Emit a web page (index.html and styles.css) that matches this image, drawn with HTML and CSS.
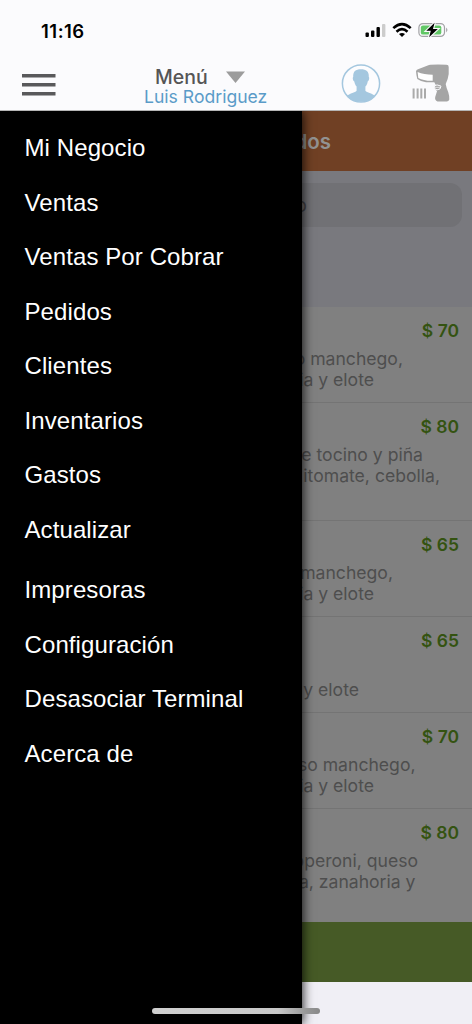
FILE: index.html
```html
<!DOCTYPE html>
<html lang="es">
<head>
<meta charset="utf-8">
<title>Menú</title>
<link rel="stylesheet" href="styles.css">
</head>
<body>
<div class="phone">
  <header class="top">
    <div class="status">
      <span class="clock">11:16</span>
      <svg class="signals" width="86" height="18" viewBox="0 0 86 18">
        <g fill="#000"><rect x="1.500" y="10.500" width="3.400" height="4.500" rx="1"/><rect x="7" y="8.500" width="3.400" height="6.500" rx="1"/><rect x="12.500" y="5" width="3.400" height="10" rx="1"/></g>
        <rect x="18" y="2" width="3.400" height="13" rx="1" fill="#ccc"/>
        <g fill="none" stroke="#000" stroke-width="2.600"><path d="M29.300 6.100Q38 -1.900 46.700 6.100"/><path d="M32.500 9.700Q38 4.700 43.500 9.700"/></g>
        <path d="M35 12.100Q38 9.900 41 12.100L38 15Z"/>
        <rect x="54.900" y="1.600" width="25.600" height="12.800" rx="4" fill="none" stroke="#a2a2a5" stroke-width="1.200"/>
        <rect x="56.800" y="3.400" width="20.500" height="9.200" rx="2.200" fill="#61c766"/>
        <path d="M82.100 5.600Q84.800 8 82.100 10.400Z" fill="#a2a2a5"/>
        <path d="M70.600 .8L62.300 8.800H66.800L65.100 15.200L73.800 7H69Z" stroke="#fbfbfd" stroke-width="2.200" paint-order="stroke"/>
      </svg>
    </div>
    <div class="nav">
      <svg class="burger" width="34" height="24" viewBox="0 0 34 24" fill="#59595b"><rect y="1" width="33.500" height="3.500"/><rect y="10" width="33.500" height="3.500"/><rect y="19" width="33.500" height="3.500"/></svg>
      <div class="heading">
        <div class="menu-title">Menú<svg width="20" height="13" viewBox="0 0 20 13"><path d="M0 .5H19L9.500 12Z" fill="#9c9c9c"/></svg></div>
        <div class="user">Luis Rodriguez</div>
      </div>
      <svg class="avatar" width="40" height="40" viewBox="0 0 40 40">
        <circle cx="20" cy="19.500" r="18.600" fill="#fcfcfe" stroke="#a4c7df" stroke-width="1.500"/>
        <path d="M20 5.300C14.500 5.300 12 7.500 12.200 13C11.500 13.200 11.700 16.700 13.300 17.500C13.800 20 14.600 21.500 15.600 22.500V26.800C14 29 9 29.100 6 31.900C13 39.700 27 39.700 34 31.900C31 29.100 26 29 24.400 26.800V22.500C25.500 21.500 26.300 20 26.700 17.500C28.300 16.700 28.500 13.200 27.800 13C28.200 7.500 25 5.300 20 5.300Z" fill="#a4c7df"/>
      </svg>
      <svg class="scanner" width="38" height="40" viewBox="0 0 38 40">
        <path d="M4 7.300Q4.300 6 6 5.300L17 1Q20 .4 34.500 .7Q36.700 .8 36.700 3V10Q36 15.500 33.700 20Q34.500 24.500 36.200 28Q37.500 32 37.300 35.500Q37 37.300 35 37.400H25.500Q22.500 36.500 23.200 33L25 27.300L22.300 23.500L23.700 20.700L22.300 18.200H14Q9 17.500 5.300 14.900Q4.200 11 4 7.300Z" fill="#a5a5a5"/>
        <path d="M5.600 8Q12 10.800 20.700 10.800V16.700Q12 17 6.300 13.900Z" fill="#fff"/>
        <path d="M22.500 22L25 20.900L29 22.100L28 24.900L25 25.900L22.200 24.300Z" fill="#a5a5a5" stroke="#fbfbfd"/>
        <path d="M22.500 23.300H28" stroke="#fbfbfd" stroke-width=".7"/>
        <g fill="#aaa"><rect x=".6" y="24.500" width="2" height="10"/><rect x="4.600" y="24.500" width="2" height="10"/><rect x="8.300" y="24.500" width="2" height="10"/><rect x="12" y="24.500" width="2" height="10"/></g>
      </svg>
    </div>
  </header>
  <main class="stage">
    <nav class="drawer">
      <a>Mi Negocio</a><a>Ventas</a><a>Ventas Por Cobrar</a><a>Pedidos</a><a>Clientes</a><a>Inventarios</a><a>Gastos</a><a>Actualizar</a>
      <a class="section">Impresoras</a><a>Configuración</a><a>Desasociar Terminal</a><a>Acerca de</a>
    </nav>
    <section class="orders">
      <div class="orders-title">dos</div>
      <div class="search-area"><div class="search"><span>o</span></div></div>
      <article class="row"><b>$ 70</b><p class="e402">o manchego,</p><p class="e374">ia y elote</p></article>
      <article class="row tall"><b>$ 80</b><p class="e423">e tocino y piña</p><p class="e439">itomate, cebolla,</p></article>
      <article class="row"><b>$ 65</b><p class="e392">manchego,</p><p class="e374">ia y elote</p></article>
      <article class="row"><b>$ 65</b><p></p><p class="e359">y elote</p></article>
      <article class="row"><b>$ 70</b><p class="e415">so manchego,</p><p class="e374">ia y elote</p></article>
      <article class="row last"><b>$ 80</b><p class="e418">pperoni, queso</p><p class="e415">a, zanahoria y</p></article>
      <div class="action"></div>
    </section>
  </main>
  <div class="home-bar"></div>
</div>
</body>
</html>
```
FILE: styles.css
```css
* { box-sizing: border-box; }
body { margin: 0; }
.phone {
  position: relative;
  width: 472px;
  height: 1024px;
  overflow: hidden;
  display: flex;
  flex-direction: column;
  background: #f0eff5;
  font-family: Inter, Roboto, sans-serif;
}
.top { height: 111px; background: #fbfbfd; border-bottom: 1px solid #b5b5b5; flex: none; }
.status { height: 60px; display: flex; align-items: center; padding: 1px 22px 0 41px; justify-content: space-between; }
.clock { font-size: 18.5px; font-weight: 600; letter-spacing: 0.5px; }
.nav { height: 50px; display: flex; align-items: flex-start; padding-left: 22px; }
.burger { margin-top: 13px; flex: none; }
.heading { margin-left: 88px; width: 140px; padding-top: 7px; flex: none; }
.menu-title { display: flex; align-items: center; gap: 18px; height: 21px; padding-left: 11px; font-size: 19.5px; line-height: 21px; font-weight: 500; color: #555; }
.user { font-size: 17.6px; line-height: 18px; color: #5a9bc8; white-space: nowrap; }
.avatar { margin: 4px 0 0 57px; flex: none; }
.scanner { margin: 4px 0 0 31px; flex: none; }
.stage { flex: 1; display: grid; grid-template-columns: 302px 170px; }
.drawer {
  position: relative;
  z-index: 1;
  padding: 10px 0 0 24.500px;
  background: #000;
  color: #fff;
  box-shadow: 1px 0 10px rgba(0, 0, 0, .85);
  font: 24px "Liberation Sans", Arial, sans-serif;
  letter-spacing: 0.1px;
  clip-path: inset(0 -30px 0 0);
}
.drawer a { display: block; height: 54.55px; line-height: 54px; white-space: nowrap; }
.drawer .section { margin-top: 6px; }
.orders { overflow: hidden; }
.orders-title { height: 60px; line-height: 61px; padding-right: 141px; display: flex; justify-content: flex-end; background: #704024; color: #929292; font-size: 20.500px; font-weight: 600; }
.search-area { height: 136px; padding: 12px 10px 0 0; background: #79797e; }
.search { height: 44px; line-height: 46px; border-radius: 0 12px 12px 0; background: #717175; color: #434346; font-size: 19px; display: flex; justify-content: flex-end; padding-right: 155px; }
.row { height: 96px; padding-top: 12.500px; border-bottom: 1px solid #747474; background: #808080; }
.row.tall { height: 118px; }
.row.last { height: 113px; border: 0; }
.row b { display: block; height: 22px; line-height: 22px; padding-right: 13px; text-align: right; color: #345311; font-size: 17.5px; font-weight: 600; }
.row p { display: flex; justify-content: flex-end; height: 21.8px; line-height: 22px; margin: 0; white-space: nowrap; color: #4e4e4e; font-size: 17.6px; }
.row b + p { margin-top: 6px; }
.e359 { padding-right: 113px; }
.e374 { padding-right: 98px; }
.e392 { padding-right: 79px; }
.e402 { padding-right: 69px; }
.e415 { padding-right: 56.500px; }
.e418 { padding-right: 54px; }
.e423 { padding-right: 49px; }
.e439 { padding-right: 32px; }
.action { height: 60px; background: #465a26; }
.home-bar { position: absolute; z-index: 2; left: 152px; top: 1008px; width: 168px; height: 6px; border-radius: 3px; background: linear-gradient(90deg, #d0d0d0 0, #c8c8c8 75%, #999 91%, #888 100%); }
```
